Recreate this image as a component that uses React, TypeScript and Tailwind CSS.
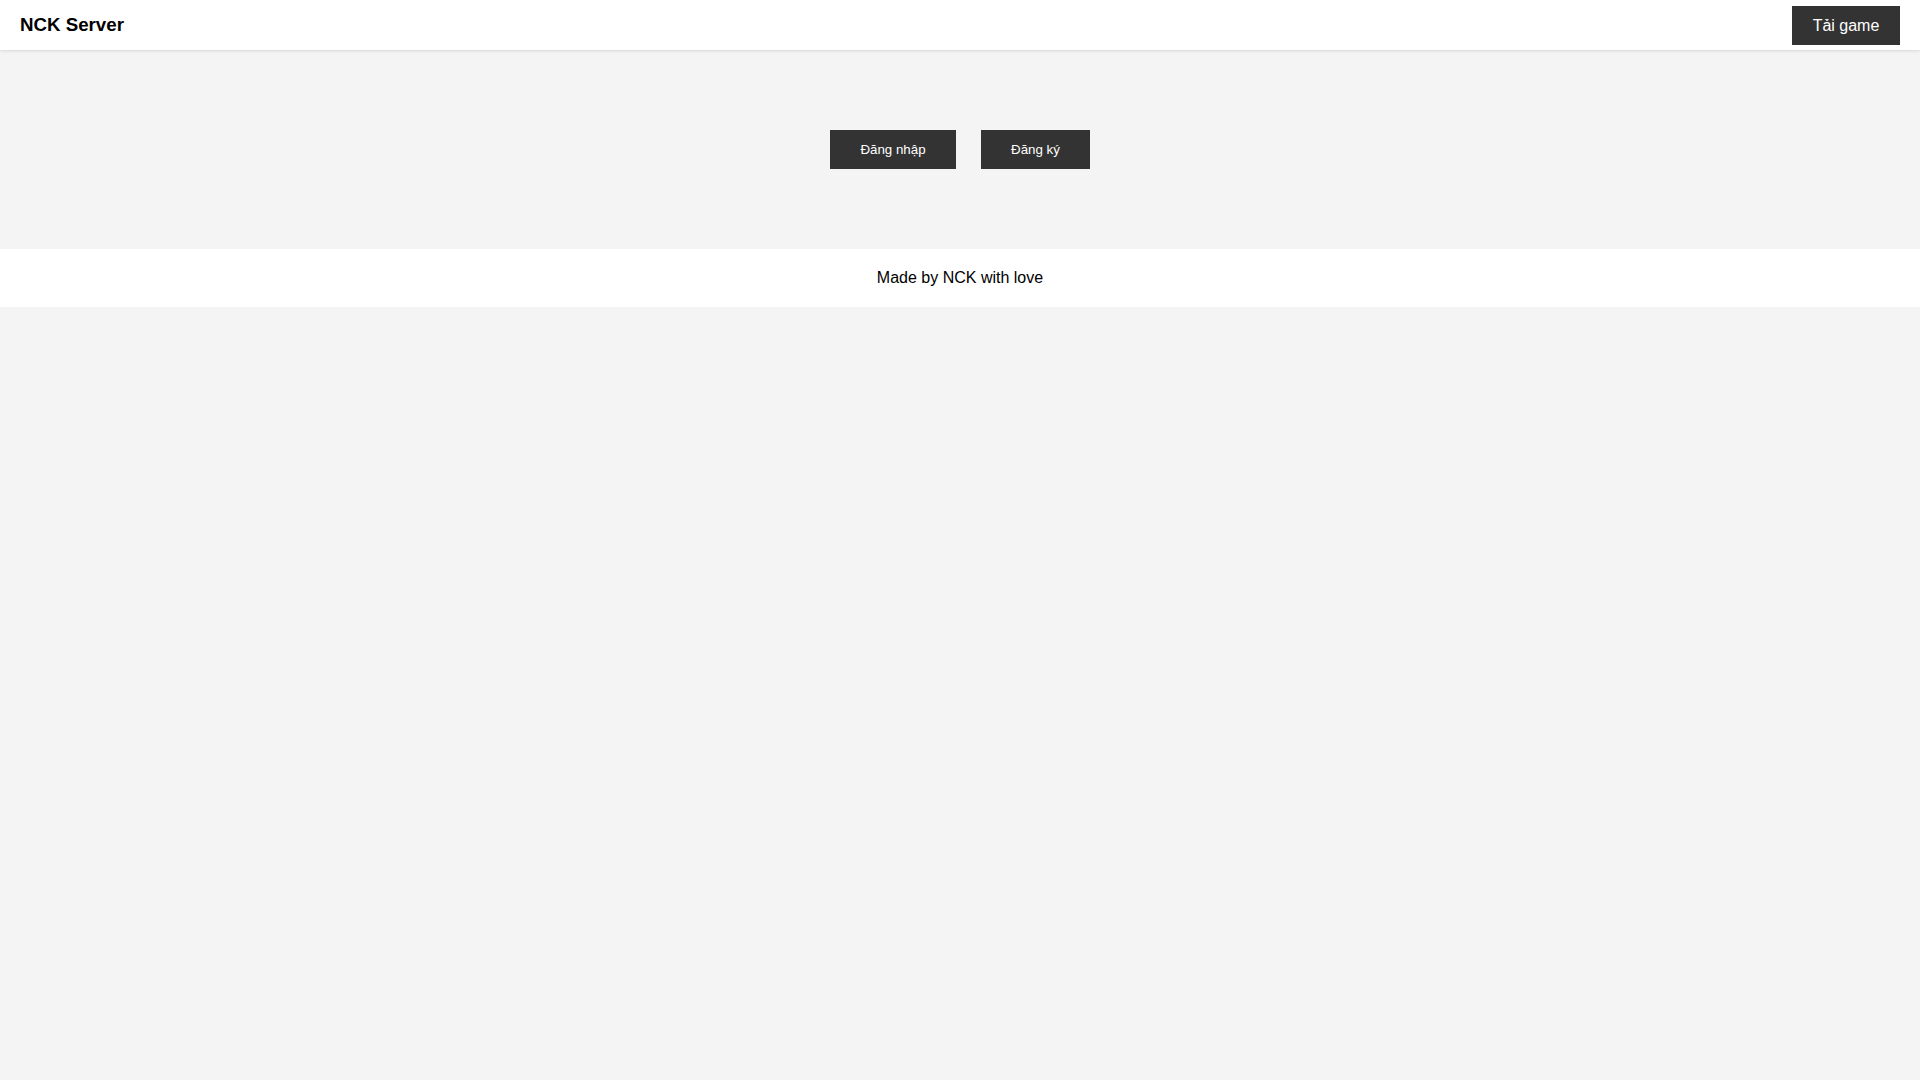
export default function App() {
  return (
    <div className="min-h-screen bg-[#f4f4f4] text-black" style={{ fontFamily: '"Liberation Sans", Arial, sans-serif' }}>
      <header className="h-[50px] bg-white flex items-center justify-between pl-5 pr-5 shadow-[0_1px_3px_rgba(0,0,0,0.12)] relative">
        <div className="text-[18.72px] font-bold pt-[1px]">NCK Server</div>
        <button className="h-[39px] w-[108px] mt-[1px] pt-[1px] bg-[#333333] text-white text-[16px]">Tải game</button>
      </header>
      <main className="h-[199px] flex items-center justify-center gap-[25px]">
        <button className="h-[39px] w-[126px] bg-[#333333] text-white text-[13.33px]">Đăng nhập</button>
        <button className="h-[39px] w-[109px] bg-[#333333] text-white text-[13.33px]">Đăng ký</button>
      </main>
      <footer className="h-[58px] bg-white flex items-center justify-center text-[16px]">
        Made by NCK with love
      </footer>
    </div>
  );
}
